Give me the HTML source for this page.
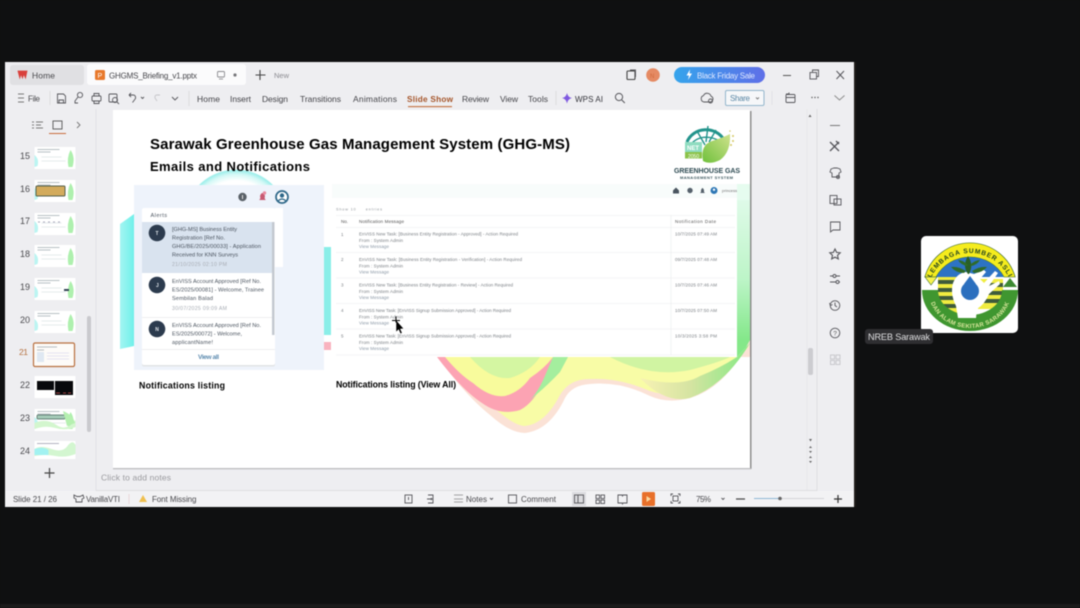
<!DOCTYPE html>
<html><head><meta charset="utf-8"><style>
html,body{margin:0;padding:0;background:#0f1011;width:1080px;height:608px;overflow:hidden}
svg{display:block;filter:blur(.4px)}
text{font-family:"Liberation Sans",sans-serif;fill:#4a4a4e;font-size:8px}
.t{font-size:8.5px;fill:#45454a}
.i{fill:none;stroke:#55555a;stroke-width:.9}
.a{font-size:5.6px;fill:#4c5560}
.d{font-size:5.2px;fill:#a8adb5}
.m{font-size:4.5px;fill:#7a7f84}
.l{font-size:4.5px;fill:#8b98a6}
.h{font-size:8.8px;font-weight:bold;fill:#000}
</style></head><body>
<svg width="1080" height="608" viewBox="0 0 1080 608" xmlns="http://www.w3.org/2000/svg">
<defs>
<linearGradient id="pill" x1="0" x2="1"><stop offset="0" stop-color="#35a4ec"/><stop offset="1" stop-color="#5f6fe8"/></linearGradient>
<linearGradient id="gr" x1="0" y1="0" x2="0" y2="1"><stop offset="0" stop-color="#e6fcef"/><stop offset=".55" stop-color="#bdf5c8"/><stop offset=".9" stop-color="#84e88a"/><stop offset="1" stop-color="#86e888"/></linearGradient>
<linearGradient id="grn" x1="0" x2="1"><stop offset="0" stop-color="#f8f2b4"/><stop offset=".45" stop-color="#d6e4a2"/><stop offset="1" stop-color="#84ea84"/></linearGradient>
<linearGradient id="cy" x1="0" x2="1"><stop offset="0" stop-color="#a4f5f2"/><stop offset="1" stop-color="#6ff0ea"/></linearGradient>
<radialGradient id="ring"><stop offset=".78" stop-color="#fff"/><stop offset=".9" stop-color="#d4f8f6"/><stop offset=".98" stop-color="#9aeeea"/><stop offset="1" stop-color="#fff" stop-opacity="0"/></radialGradient>
<linearGradient id="leaf" x1="0" y1="1" x2="1" y2="0"><stop offset="0" stop-color="#6fc03c"/><stop offset="1" stop-color="#cfe28c"/></linearGradient>
<path id="arcT" d="M927 296 A43 43 0 0 1 1013 296"/>
<path id="arcB" d="M929 292 A41 36 0 0 0 1011 292"/>
<g id="thb"><rect width="41" height="22" fill="#fff"/><path d="M3 2.500h22M3 5h13" stroke="#a0abb0" stroke-width=".8"/><path d="M36 3q5 7 2 17h-4q-2-9 2-17z" fill="#aef0ae"/><path d="M0 8q5 4 3 11l-3 1z" fill="#bcf5f2"/><path d="M7 10h20M7 14h24" stroke="#dde3e6" stroke-width=".7"/></g>
</defs>

<rect width="1080" height="608" fill="#0f1011"/>
<rect y="604" width="1080" height="4" fill="#1b1b1b"/>
<!-- window -->
<rect x="5" y="62" width="849" height="445" fill="#eeeef1"/>
<rect x="854" y="62" width="2" height="445" fill="#1d1a18"/>
<!-- tab row -->
<rect x="10" y="65" width="74" height="20" rx="3" fill="#e0e0e3"/>
<rect x="87" y="64" width="159" height="21" rx="3" fill="#fbfbfc"/>
<path d="M18 71h9l-1.500 7-1.700-4-1.300 4-1.500-4-1.200 4z" fill="#d9403b" stroke="#d9403b" stroke-width=".8"/>
<text x="32" y="78.500" textLength="23" style="font-size:8.500px">Home</text>
<rect x="95" y="70" width="10" height="10" rx="1.500" fill="#e8792c"/>
<text x="97.500" y="78" style="font-size:7px;fill:#fff">P</text>
<text x="109" y="78.500" textLength="88" style="font-size:8px;fill:#45454a">GHGMS_Briefing_v1.pptx</text>
<rect x="217.500" y="71.500" width="7" height="5.500" rx="1" class="i" style="stroke:#8c8c90"/><path d="M219 79h4" class="i" style="stroke:#8c8c90"/>
<circle cx="235" cy="75" r="1.600" fill="#77777b"/>
<path d="M260 70v10M255.500 75h10" stroke="#444" stroke-width="1.100"/>
<text x="274" y="78" textLength="15" style="font-size:7.500px;fill:#8a8a90">New</text>
<rect x="627" y="71" width="8" height="8.500" rx="1" class="i" style="stroke:#444;stroke-width:1.100"/>
<path d="M630 70h5.500v7" class="i"/>
<circle cx="653" cy="75" r="6.800" fill="#e58a63"/><text x="650" y="78" style="font-size:6px;fill:#d06a3c">N</text>
<rect x="674" y="67" width="91" height="16" rx="8" fill="url(#pill)"/>
<path d="M690 69.500l-3.500 6h2.500l-1 4.500 4-6.500h-2.500z" fill="#fff"/>
<text x="697" y="78.500" textLength="58" style="font-size:8px;fill:#dfe8ff">Black Friday Sale</text>
<path d="M783 75.500h8" stroke="#555" stroke-width="1"/>
<rect x="810" y="72.500" width="6.500" height="6.500" class="i"/><path d="M812.500 72v-2h6v6.500h-2" class="i"/>
<path d="M836.500 71l7.500 8M844 71l-7.500 8" class="i" style="stroke-width:1"/>

<!-- toolbar -->
<path d="M18 94h6M18 98h6M18 102h6" stroke="#777" stroke-width=".9"/>
<text x="28" y="101.500" textLength="12" style="font-size:8px">File</text>
<path d="M50 91v14" stroke="#ddd"/>
<path d="M57.500 94h6l2 2v7h-8zM59 103v-3h4.500v3" class="i"/>
<circle cx="80" cy="95" r="2.600" class="i"/><path d="M78 97l-3 4v2h3" class="i"/>
<rect x="92" y="96" width="9" height="5" rx="1" class="i"/><path d="M94 96v-2.500h5v2.500M94 101v2.500h5V101" class="i"/>
<rect x="109" y="94" width="8" height="8" rx="1" class="i"/><circle cx="115" cy="100" r="2.500" class="i"/><path d="M117 102l2 2" class="i"/>
<path d="M129 95h4q3 0 2.500 3.500l-3 4M129 95l2-2M129 95l2 2" class="i"/><path d="M141 97l1.500 1.500 1.500-1.500" class="i"/>
<path d="M160 95h-3q-2.500 0-2 3l2 3" class="i" style="stroke:#c4c4c8"/>
<path d="M172 97l3 3 3-3" class="i"/>
<path d="M189 91v15" stroke="#dcdcdf"/>
<text x="197" y="102" textLength="23" class="t">Home</text>
<text x="230" y="102" textLength="21" class="t">Insert</text>
<text x="262" y="102" textLength="26" class="t">Design</text>
<text x="300" y="102" textLength="41" class="t">Transitions</text>
<text x="353" y="102" textLength="44" class="t">Animations</text>
<text x="407" y="102" textLength="46" class="t" style="font-weight:bold;fill:#a5552a;font-size:8.200px">Slide Show</text>
<rect x="408" y="106" width="44" height="1.200" fill="#c77a4c"/>
<text x="462" y="102" textLength="27" class="t">Review</text>
<text x="500" y="102" textLength="18" class="t">View</text>
<text x="528" y="102" textLength="20" class="t">Tools</text>
<path d="M556 91v14" stroke="#dcdcdf"/>
<path d="M567 93q1 4.500 5 5q-4 .8-5 5.500q-1-4.700-5-5.500q4-.5 5-5z" fill="#7f59e0"/>
<text x="575" y="102" textLength="28" style="font-size:8px;fill:#33333a">WPS AI</text>
<circle cx="619" cy="97" r="3.600" class="i" style="stroke-width:1"/><path d="M621.800 100l3 3" class="i" style="stroke-width:1"/>
<path d="M704 102h6a3 3 0 0 0 1-5.800a4 4 0 0 0-7.500-.6a3.300 3.300 0 0 0 .5 6.400z" class="i"/><circle cx="710.500" cy="101" r="2" fill="#eeeef1" class="i"/>
<rect x="725.500" y="90.500" width="38.500" height="15" rx="1.500" fill="#f6f7f9" stroke="#93b6cc"/>
<text x="730" y="101" textLength="20" style="font-size:8px;fill:#5a87a5">Share</text>
<path d="M756 97.500l1.500 1.500 1.500-1.500" class="i" style="stroke:#777"/>
<path d="M772 91v14" stroke="#e2e2e5"/>
<rect x="786" y="94.500" width="9" height="8" rx="1" class="i"/><path d="M786 97.500h9M786 94h3v-1.500" class="i"/>
<circle cx="812" cy="97.500" r=".7" fill="#555"/><circle cx="815" cy="97.500" r=".7" fill="#555"/><circle cx="818" cy="97.500" r=".7" fill="#555"/>
<path d="M834.500 95.500l5 4.500 5-4.500" class="i" style="stroke:#888"/>

<!-- left panel -->
<path d="M96 109v382" stroke="#e2e2e5"/>
<path d="M32 122h2M36 122h7M32 125h2M36 125h5M32 128h2M36 128h7" stroke="#777" stroke-width=".9"/>
<rect x="53" y="121" width="9" height="8" class="i" style="stroke:#555"/>
<rect x="49" y="133" width="17" height="1" fill="#c86c3c"/>
<path d="M77 122l3 3-3 3" class="i" style="stroke:#777"/>
<text x="20" y="159" textLength="10" style="font-size:9px">15</text>
<text x="20" y="192" textLength="10" style="font-size:9px">16</text>
<text x="20" y="224" textLength="10" style="font-size:9px">17</text>
<text x="20" y="257" textLength="10" style="font-size:9px">18</text>
<text x="20" y="290" textLength="10" style="font-size:9px">19</text>
<text x="20" y="323" textLength="10" style="font-size:9px">20</text>
<text x="19" y="355" textLength="9" style="font-size:8.500px;fill:#b5703f">21</text>
<text x="20" y="388" textLength="10" style="font-size:9px">22</text>
<text x="20" y="421" textLength="10" style="font-size:9px">23</text>
<text x="20" y="454" textLength="10" style="font-size:9px">24</text>
<use href="#thb" x="34.500" y="147"/>
<use href="#thb" x="34.500" y="180"/><rect x="36" y="186" width="29" height="10" rx="1" fill="#d3ab5c" stroke="#55604a"/>
<use href="#thb" x="34.500" y="213"/><path d="M38 222h25" stroke="#aab" stroke-dasharray="2 3"/>
<use href="#thb" x="34.500" y="245"/>
<use href="#thb" x="34.500" y="278"/><rect x="64" y="289" width="5" height="2" fill="#345"/>
<use href="#thb" x="34.500" y="311"/>
<rect x="33.500" y="343" width="41" height="23.500" rx="1.500" fill="#fdfbf8" stroke="#b9703f" stroke-width="1.200"/>
<path d="M37 347h20M37 350h7" stroke="#a0abb0" stroke-width=".7"/><rect x="37" y="352" width="7" height="10" fill="#dfe8f2"/><path d="M47 353h22M47 356h22M47 359h22" stroke="#dde" stroke-width=".7"/>
<rect x="34.500" y="376" width="41" height="22" fill="#fff"/><rect x="37" y="381" width="17" height="9" fill="#08090c"/><rect x="55" y="381" width="18" height="14" fill="#08090c"/><path d="M56 393h4M63 393h3M68 393h3" stroke="#a04040"/>
<use href="#thb" x="34.500" y="409"/><path d="M34.500 423q12-5 22 2t19-5v7q-10 4-20 1t-21 1z" fill="#d3f6ce"/><rect x="37" y="415" width="28" height="4" rx="1" fill="#a5cbb8" stroke="#45665a" stroke-width=".7"/><path d="M63 411q10 4 12 12l-8 3z" fill="#b5f0b0"/>
<rect x="34.500" y="441" width="41" height="18" fill="#fff"/><path d="M34.500 449q6-4 17 0t16-3 8-1v9q-10 4-20 2t-21 0z" fill="#d3f6d0"/><path d="M34.500 449q8-3 14 1v5h-14z" fill="#a2f2f1"/><path d="M37 443.500h22" stroke="#99a" stroke-width=".7"/>
<rect x="87" y="316" width="4" height="116" rx="2" fill="#c9c9cd"/>
<path d="M49.500 468v10M44.500 473h10" stroke="#444" stroke-width="1.200"/>

<!-- slide -->
<rect x="113" y="110" width="637" height="358" fill="#fff"/>
<rect x="750" y="111" width="1.500" height="358" fill="#8d8d8d"/>
<rect x="113" y="468" width="638" height="1.300" fill="#bdbdc0"/>
<!-- bg waves -->
<circle cx="236" cy="222" r="53" fill="url(#ring)"/>
<path d="M120 224l14-10v132l-14 3z" fill="url(#cy)"/>
<path d="M737 184h13v159l-13 14h-10z" fill="url(#gr)"/>
<path d="M720 184h24l6 6v10h-30z" fill="#e6fcef"/>
<!-- bottom wave -->
<path d="M437 356Q465 395 490 415Q510 433 525 433Q550 430 565 398Q572 385 590 384Q620 381 650 396Q668 404 690 398Q725 388 750 340V357H437z" fill="#fbe2d6"/>
<path d="M445 357Q505 426 525 426Q545 424 560 395Q570 378 592 379Q620 378 650 391Q668 397 690 391Q720 380 750 345L737 357z" fill="#f8fca6"/>
<path d="M437 357Q462 390 482 403Q500 416 520 410Q540 400 553 357z" fill="#fca3b3"/>
<path d="M445 357Q460 375 473 383Q490 398 505 396Q520 392 530 378Q545 368 553 357z" fill="#f8fb9c"/>
<path d="M470 357Q490 380 510 378Q530 372 540 357z" fill="#d4f6a2"/>
<path d="M553 357L544 378Q538 392 530 400Q548 385 560 372L568 357z" fill="#a4ee9e"/>
<path d="M610 357Q650 378 690 370Q720 362 730 357z" fill="#d0f4a2"/>
<path d="M640 378Q680 388 700 376Q720 368 737 357L750 343Q725 385 690 398Q665 404 640 378z" fill="url(#grn)"/>
<!-- heading -->
<text x="150" y="149" textLength="420" style="font-size:15px;font-weight:bold;fill:#000">Sarawak Greenhouse Gas Management System (GHG-MS)</text>
<text x="150" y="171" textLength="160" style="font-size:13px;font-weight:bold;fill:#000">Emails and Notifications</text>
<!-- logo -->
<g>
<path d="M687 142A20 18 0 0 1 724 140" fill="none" stroke="#23948c" stroke-width="3"/>
<path d="M690 145q12-14 32-3M697 131l8 14M708 126l-2 16M716 130l-7 12" fill="none" stroke="#23948c" stroke-width="1.400"/>
<rect x="685" y="142" width="17" height="16" fill="#8fdcc0"/>
<text x="687" y="150" style="font-size:6px;fill:#fff;font-weight:bold">NET</text>
<rect x="685" y="152" width="17" height="6.500" fill="#8bc34a"/>
<text x="688" y="158" style="font-size:5px;fill:#fff">2050</text>
<path d="M703 161Q700 145 712 141Q722 138 730 134Q731 152 720 160Q710 165 703 161z" fill="url(#leaf)"/>
<circle cx="730" cy="131" r=".8" fill="#d5c865"/><circle cx="733" cy="136" r="1" fill="#d5c865"/><circle cx="733" cy="141" r="1" fill="#d5c865"/><circle cx="731" cy="145" r="1" fill="#d5c865"/>
<text x="674" y="173" textLength="66" style="font-size:7px;font-weight:bold;fill:#2d4a52">GREENHOUSE GAS</text>
<text x="680" y="179" textLength="53" style="font-size:4px;font-weight:bold;fill:#3f5a60">MANAGEMENT SYSTEM</text>
</g>

<!-- notifications panel -->
<rect x="134" y="185" width="190" height="185" fill="#eef3fb"/>
<rect x="324" y="247" width="7" height="88" fill="#8aeee8"/>
<rect x="324" y="342" width="7" height="8" fill="#f9b3bf"/>
<path d="M275 208h8v59h-8z" fill="#fff"/>
<circle cx="242.500" cy="197" r="4.200" fill="#5a6168"/><rect x="242" y="195" width="1" height="4" fill="#e5e5e5"/>
<path d="M259 200q2-1 1-4q1-3 2.500-3t2.500 3q-1 3 1 4z" fill="#c85a72"/><circle cx="264.500" cy="193" r="1.700" fill="#e98ba0"/>
<circle cx="282" cy="197" r="6" fill="#fff" stroke="#2f6889" stroke-width="1.700"/><circle cx="282" cy="195.500" r="2.200" fill="#2f6889"/><path d="M278 201q4-4 8 0" fill="none" stroke="#2f6889" stroke-width="1.200"/>
<rect x="142" y="208" width="133" height="157" rx="2" fill="#ddd" opacity=".7" transform="translate(0 1.500)"/>
<rect x="142" y="208" width="133" height="157" rx="2" fill="#fff"/>
<text x="150.500" y="217" textLength="16.500" class="a">Alerts</text>
<rect x="142" y="222" width="130" height="51" fill="#d9e3ef"/>
<rect x="272" y="222" width="2.500" height="113" fill="#c4c9d0"/>
<path d="M142 317.500h130M142 349.500h133" stroke="#e9e9ec" stroke-width=".7"/>
<circle cx="157" cy="233" r="8.300" fill="#2c3b4e"/><text x="155.500" y="235" style="font-size:5px;fill:#dfe5ea;font-weight:bold">T</text>
<circle cx="157" cy="285" r="8.300" fill="#2c3b4e"/><text x="156" y="287" style="font-size:5px;fill:#dfe5ea;font-weight:bold">J</text>
<circle cx="157" cy="329" r="8.300" fill="#2c3b4e"/><text x="155.300" y="331" style="font-size:5px;fill:#dfe5ea;font-weight:bold">N</text>
<text x="172" y="231" textLength="65" class="a">[GHG-MS] Business Entity</text>
<text x="172" y="239.500" textLength="53" class="a">Registration [Ref No.</text>
<text x="172" y="248" textLength="89" class="a">GHG/BE/2025/00033] - Application</text>
<text x="172" y="256.500" textLength="66" class="a">Received for KNN Surveys</text>
<text x="172" y="266" textLength="55" class="d">21/10/2025 02:10 PM</text>
<text x="172" y="283" textLength="89" class="a">EnVISS Account Approved [Ref No.</text>
<text x="172" y="291.500" textLength="92" class="a">ES/2025/00081] - Welcome, Trainee</text>
<text x="172" y="300" textLength="41" class="a">Sembilan Balad</text>
<text x="172" y="310" textLength="55" class="d">30/07/2025 09:09 AM</text>
<text x="172" y="327" textLength="89" class="a">EnVISS Account Approved [Ref No.</text>
<text x="172" y="335.500" textLength="70" class="a">ES/2025/00072] - Welcome,</text>
<text x="172" y="344" textLength="41" class="a">applicantName!</text>
<text x="198" y="359" textLength="21" style="font-size:6.500px;font-weight:bold;fill:#5e8cb0">View all</text>
<text x="139" y="388.500" textLength="86" class="h">Notifications listing</text>

<!-- table -->
<rect x="332" y="184" width="405" height="173" fill="#fff"/>
<rect x="332" y="184" width="405" height="14" fill="#f8fcfb"/>
<path d="M673 190.500l3-3 3 3v3h-6z" fill="#4a5560"/>
<circle cx="690" cy="190.500" r="2.700" fill="#56616c"/>
<path d="M700 193l1-1v-2q1-2 1.500-2t1.500 2v2l1 1z" fill="#56616c"/>
<circle cx="714" cy="190.500" r="3.500" fill="#2e77b5"/><circle cx="714" cy="189.700" r="1.200" fill="#fff"/>
<text x="722" y="192" textLength="15" style="font-size:3.800px;fill:#666">princess</text>
<text x="336" y="210.500" textLength="46" style="font-size:3.800px;fill:#90959a">Show 10 &#160; &#160; entries</text>
<path d="M336 215.500h399M336 227.500h399M336 252.500h399M336 278h399M336 303.500h399M336 329h399M336 355h399" stroke="#f1f2f4" stroke-width=".7"/>
<path d="M671 215v140" stroke="#eceef0" stroke-width=".7"/>
<text x="341" y="223" textLength="7" style="font-size:4.600px;fill:#555">No.</text>
<text x="359" y="223" textLength="45" style="font-size:4.600px;fill:#555">Notification Message</text>
<text x="675" y="223" textLength="41" style="font-size:4.600px;fill:#555">Notification Date</text>
<text x="341" y="236" class="m">1</text>
<text x="359" y="235.500" textLength="159" class="m">EnVISS New Task: [Business Entity Registration - Approved] - Action Required</text>
<text x="359" y="242" textLength="44" class="m">From : System Admin</text>
<text x="359" y="248" textLength="30" class="l">View Message</text>
<text x="675" y="235.500" textLength="42" class="m">10/7/2025 07:49 AM</text>
<text x="341" y="261" class="m">2</text>
<text x="359" y="261" textLength="163" class="m">EnVISS New Task: [Business Entity Registration - Verification] - Action Required</text>
<text x="359" y="267.500" textLength="44" class="m">From : System Admin</text>
<text x="359" y="273.500" textLength="30" class="l">View Message</text>
<text x="675" y="261" textLength="42" class="m">09/7/2025 07:48 AM</text>
<text x="341" y="286.500" class="m">3</text>
<text x="359" y="286.500" textLength="154" class="m">EnVISS New Task: [Business Entity Registration - Review] - Action Required</text>
<text x="359" y="293" textLength="44" class="m">From : System Admin</text>
<text x="359" y="299" textLength="30" class="l">View Message</text>
<text x="675" y="286.500" textLength="42" class="m">10/7/2025 07:46 AM</text>
<text x="341" y="312" class="m">4</text>
<text x="359" y="312" textLength="152" class="m">EnVISS New Task: [EnVISS Signup Submission Approved] - Action Required</text>
<text x="359" y="318.500" textLength="44" class="m">From : System Admin</text>
<text x="359" y="324.500" textLength="30" class="l">View Message</text>
<text x="675" y="312" textLength="42" class="m">10/7/2025 07:50 AM</text>
<text x="341" y="337.500" class="m">5</text>
<text x="359" y="337.500" textLength="152" class="m">EnVISS New Task: [EnVISS Signup Submission Approved] - Action Required</text>
<text x="359" y="344" textLength="44" class="m">From : System Admin</text>
<text x="359" y="350" textLength="30" class="l">View Message</text>
<text x="675" y="337.500" textLength="42" class="m">10/3/2025 3:58 PM</text>
<text x="336" y="387.500" textLength="120" class="h">Notifications listing (View All)</text>
<!-- cursor -->
<path d="M396 320l0 12 2.600-2.400 1.800 4.200 1.800-.8-1.800-4 3.400-.2z" fill="#000" stroke="#fff" stroke-width=".5"/>
<path d="M392 320.500h8M396 316.500v6" stroke="#000" stroke-width="1"/>

<!-- right zone -->
<path d="M817 109v398" stroke="#dfdfe3"/>
<path d="M807 109v382" stroke="#e8e8eb"/>
<path d="M810 114.500l-1.500 2.500h3z" fill="#666"/>
<rect x="808" y="348" width="5" height="27" rx="2" fill="#ccccd0"/>
<path d="M810.500 441.500l-1.500-2.500h3z" fill="#666"/>
<path d="M809 448h3l-1.500-2zM809 451h3l-1.500 2z" fill="#666"/><path d="M809 458h3l-1.500-2zM809 461h3l-1.500 2z" fill="#666"/>
<path d="M830 125.500h10" stroke="#777" stroke-width="1"/>
<path d="M830 151l9-9M830 142l9 9M836 141l3 3" class="i" style="stroke-width:1.300"/>
<path d="M831 169l3-1h3l3 1 1 3-2 1v4h-7v-4l-2-1z" class="i"/><circle cx="838" cy="177" r="1.500" class="i"/>
<rect x="830" y="195.500" width="7" height="8" class="i"/><rect x="834" y="199" width="7" height="6" class="i" fill="#eeeef1"/>
<path d="M830.500 222h9.500v8h-7l-2.500 2z" class="i"/>
<path d="M835 249l1.600 3.400 3.600.4-2.700 2.500.8 3.600-3.300-1.800-3.300 1.800.8-3.600-2.700-2.500 3.600-.4z" class="i" style="stroke-width:1.100"/>
<path d="M830 276h3M836 276h4M830 282h6M839 282h1" class="i"/><circle cx="834.500" cy="276" r="1.500" class="i"/><circle cx="837.500" cy="282" r="1.500" class="i"/>
<circle cx="835" cy="305.500" r="4.800" class="i"/><path d="M835 302.500v3l2 1.500M829.500 303l1 2.500 2-1" class="i"/>
<circle cx="835" cy="333" r="4.800" class="i"/><text x="833.300" y="335.600" style="font-size:6.500px;fill:#555">?</text>
<g class="i" style="stroke:#c5c5c9"><rect x="830.500" y="355" width="4" height="4"/><rect x="836" y="355" width="4" height="4"/><rect x="830.500" y="360.500" width="4" height="4"/><rect x="836" y="360.500" width="4" height="4"/></g>

<!-- notes -->
<path d="M96 490.500h721" stroke="#dedee1"/>
<text x="101" y="480.500" textLength="70" style="font-size:8.500px;fill:#9a9a9e">Click to add notes</text>
<!-- status -->
<rect x="5" y="491" width="849" height="16" fill="#f2f2f4"/>
<text x="13" y="502" textLength="44" style="font-size:8px">Slide 21 / 26</text>
<path d="M74 495l3 1.500h3l3-1.500 1 3-2 1v3h-6v-3l-2-1z" class="i"/>
<text x="86" y="502" textLength="34" style="font-size:8px">VanillaVTI</text>
<path d="M129 494v10" stroke="#ead8d8"/>
<path d="M143 495l4 7h-8z" fill="#efc050"/>
<text x="152" y="502" textLength="44.500" style="font-size:8px">Font Missing</text>
<rect x="405" y="495" width="7" height="8" class="i"/><path d="M408.500 497v3" class="i"/>
<path d="M428 495h5v8h-5M427 499h5M431 500l1-1-1-1" class="i"/>
<path d="M454 495h9M454 499h9M454 502h9" stroke="#888" stroke-width=".8"/>
<text x="466" y="502" textLength="21" style="font-size:8px">Notes</text>
<path d="M490 498l1.500 1.500 1.500-1.500" class="i"/>
<rect x="508.500" y="495" width="8" height="8" class="i"/>
<text x="521" y="502" textLength="35" style="font-size:8px">Comment</text>
<rect x="572" y="492" width="14" height="14" fill="#dcdcdf"/>
<rect x="574.500" y="495" width="9" height="8" class="i"/><path d="M578 495v8" class="i"/>
<g class="i"><rect x="596" y="495" width="3.500" height="3.500"/><rect x="601" y="495" width="3.500" height="3.500"/><rect x="596" y="500" width="3.500" height="3.500"/><rect x="601" y="500" width="3.500" height="3.500"/></g>
<path d="M618 495h4l.5 1 .5-1h4v8h-4l-.5 1-.5-1h-4z" class="i"/>
<rect x="642" y="492" width="13" height="14" rx="1.500" fill="#e8702a"/><path d="M646.500 496v6l4.500-3z" fill="#fbd9a0"/>
<path d="M671 496v-2h2M678 494h2v2M680 501v2h-2M673 503h-2v-2" class="i"/><rect x="673" y="496" width="5" height="5" class="i"/>
<text x="696" y="502" textLength="15" style="font-size:8px">75%</text>
<path d="M721.500 498l1.500 1.500 1.500-1.500" class="i"/>
<path d="M736 499h9" stroke="#444" stroke-width="1.200"/>
<path d="M754 498.500h26" stroke="#8fb8d6" stroke-width="1"/><path d="M780 498.500h44" stroke="#d5d5d9" stroke-width="1"/>
<circle cx="780" cy="498.500" r="1.800" fill="#666"/>
<path d="M838 495v8M834 499h8" stroke="#333" stroke-width="1.200"/>

<!-- participant logo -->
<rect x="921" y="236" width="97" height="97" rx="5" fill="#fff"/>
<path d="M924.800 277A47 47 0 0 1 1015.200 277H1004A39 39 0 0 0 936 277z" fill="#f5ec1d" stroke="#2a5d24" stroke-width=".6"/>
<path d="M936 277A39 39 0 0 1 1004 277z" fill="#2d73c4"/>
<text style="font-size:6.600px;font-weight:bold;fill:#23431f;letter-spacing:.9px" text-anchor="middle"><textPath href="#arcT" startOffset="50%">LEMBAGA SUMBER ASLI</textPath></text>
<path d="M938 277h24v36h-24z" fill="#f0ec40"/>
<path d="M938 280h24v4h-24zM938 288h24v4h-24zM938 296h24v4h-24zM940 304h22v4h-22z" fill="#3e5b3c"/>
<path d="M978 279h25v30h-25z" fill="#f0ec40"/>
<path d="M978 283h25v4h-25zM978 291h25v4h-25zM978 299h25v4h-25z" fill="#3e5b3c"/>
<path d="M925 277h12l-6 8z" fill="#f7f34c" stroke="#3a6a30" stroke-width=".6"/>
<path d="M1003 287l7-9 7 9z" fill="#3d8a32"/>
<path d="M922 290H938A32 25 0 0 0 1002 290H1018A48 41 0 0 1 922 290z" fill="#3f9630"/>
<text style="font-size:6px;font-weight:bold;fill:#d7e59b;letter-spacing:.3px" text-anchor="middle"><textPath href="#arcB" startOffset="50%">DAN ALAM SEKITAR SARAWAK</textPath></text>
<path d="M958 318L956 306Q950 294 953 283Q957 273 966 272L974 274L984 270L986 272L980 279L984 283L995 271L998 273L989 286L999 281L1000 284L989 294Q985 304 977 309L976 318z" fill="#fff"/>
<circle cx="970" cy="291" r="9" fill="#2b6fbe"/><path d="M970 276l6 8h-12z" fill="#2b6fbe"/>
<path d="M968 274q-6-8 0-18q6 9 1 18z" fill="#285f28"/>
<path d="M966 271q-8-5-15-4q5 6 13 6zM972 271q8-5 15-4q-5 6-13 6z" fill="#2f6b2a"/>
<path d="M968 265q-5-5-10-5q3 5 9 6zM970 265q5-5 10-5q-3 5-9 6z" fill="#2f6b2a"/>
<rect x="865" y="329" width="68" height="15" rx="3" fill="#2e2e31"/>
<text x="868" y="340" textLength="62" style="font-size:9.200px;fill:#dfdfe1">NREB Sarawak</text>
</svg>
</body></html>
